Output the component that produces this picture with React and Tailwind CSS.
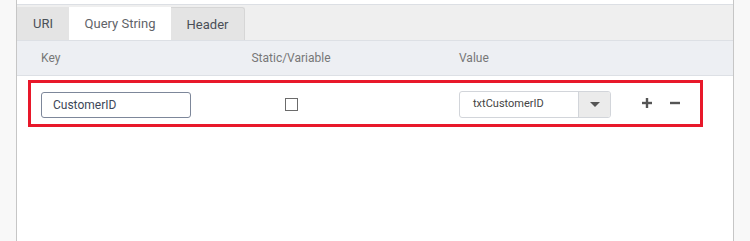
import React from "react";

const Tab = ({ label, active, last }) => (
    <div
        className={
            active
                ? "flex h-[33px] w-[102px] items-center justify-center bg-white pt-[1px] text-[13px] text-[#5f6368]"
                : last
                ? "flex h-[33px] w-[74px] items-center justify-center rounded-tr-[3px] border-r border-t border-[#d6d6d6] bg-[#e4e4e4] pt-[1px] text-[13px] text-[#4a4f57]"
                : "flex h-[33px] w-[52px] items-center justify-center bg-[#e4e4e4] pt-[1px] text-[13px] text-[#4a4f57]"
        }
    >
        {label}
    </div>
);

const Plus = () => (
    <svg width="10" height="10" viewBox="0 0 10 10">
        <rect x="3.8" y="0" width="2.4" height="10" fill="#555" />
        <rect x="0" y="3.8" width="10" height="2.4" fill="#555" />
    </svg>
);

const Minus = () => (
    <svg width="10" height="10" viewBox="0 0 10 10">
        <rect x="0" y="3.8" width="10" height="2.4" fill="#555" />
    </svg>
);

const App = () => {
    return (
        <div
            className="flex h-[241px] w-[750px] bg-[#f8f8f8]"
            style={{ fontFamily: "Roboto, 'Liberation Sans', sans-serif" }}
        >
            <div className="ml-4 flex w-[718px] flex-col border-x border-[#c6c6c6] bg-white pt-1">
                {/* tabs */}
                <div className="flex h-[36px] items-end border-t border-[#dcdfe4] bg-[#efefef]">
                    <Tab label="URI" />
                    <Tab label="Query String" active />
                    <Tab label="Header" last />
                </div>

                {/* header */}
                <div className="flex h-[36px] items-center border-y border-[#dde0e5] bg-[#edeff3] pl-[24px] text-[12px] text-[#777]">
                    <div className="w-[170px]">Key</div>
                    <div className="w-[160px] text-center">Static/Variable</div>
                    <div className="ml-[88px]">Value</div>
                </div>

                {/* row */}
                <div className="ml-[11px] mt-[4px] flex h-[47px] w-[675px] items-start border-[3px] border-[#e8182a] pl-[10px] pt-[8px]">
                    <div className="w-[170px]">
                        <input
                            className="mt-[1px] h-[26px] w-[150px] rounded-[3px] border border-[#7d879a] px-[11px] text-[12px] text-[#3d4758] outline-none"
                            defaultValue="CustomerID"
                            style={{ fontFamily: "Roboto, 'Liberation Sans', sans-serif" }}
                        />
                    </div>
                    <div className="flex w-[160px] justify-center pt-[7px]">
                        <div className="h-[13px] w-[13px] border border-[#6b6b6b] bg-white"></div>
                    </div>
                    <div className="ml-[88px] flex h-[27px] w-[152px] overflow-hidden rounded-[3px] border border-[#d2d5da]">
                        <div className="flex flex-1 items-center pl-[13px] text-[11px] text-[#444]">
                            txtCustomerID
                        </div>
                        <div className="flex w-[32px] items-center justify-center border-l border-[#d2d5da] bg-[#ebebeb]">
                            <svg width="10" height="6" viewBox="0 0 10 6">
                                <path d="M0 0 L10 0 L5 5 Z" fill="#555" />
                            </svg>
                        </div>
                    </div>
                    <div className="ml-[31px] flex items-center gap-[18px] pt-[7px]">
                        <Plus />
                        <Minus />
                    </div>
                </div>
            </div>
        </div>
    );
};

export default App;
